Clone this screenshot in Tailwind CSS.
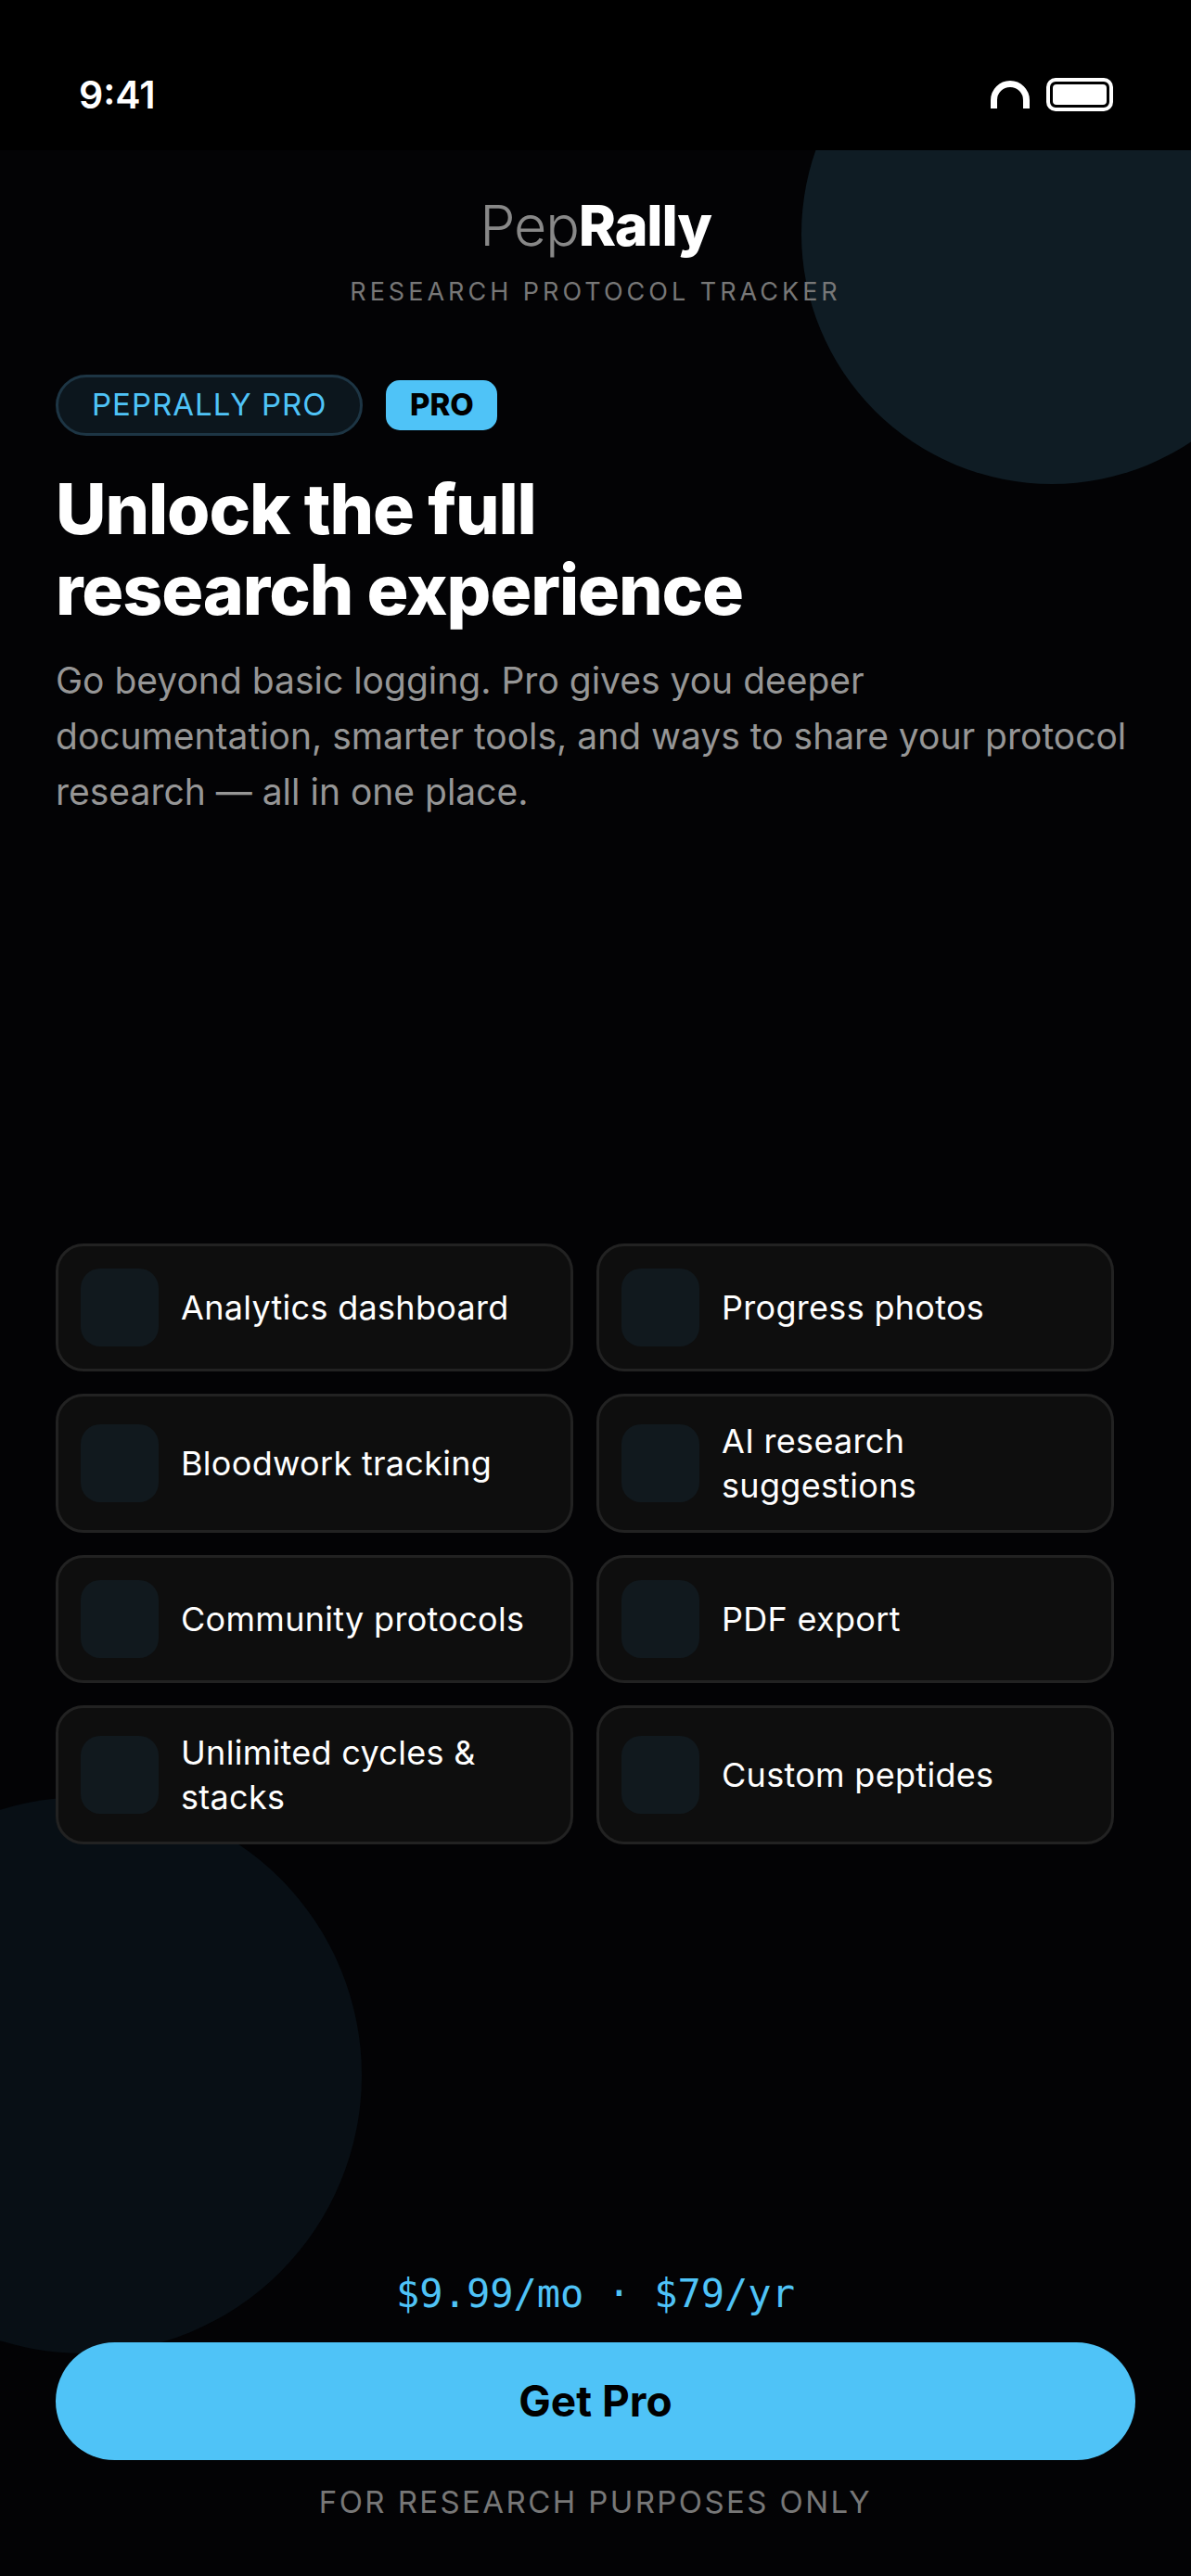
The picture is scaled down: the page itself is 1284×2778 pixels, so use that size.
<!DOCTYPE html>
<html lang="en">
<head>
    <meta charset="UTF-8">
    <meta name="viewport" content="width=device-width, initial-scale=1.0">
    <title>PepRally Pro</title>
    <script src="https://cdn.jsdelivr.net/npm/@tailwindcss/browser@4"></script>
</head>
<body class="bg-[#030305] font-['Inter',sans-serif]">
    <div class="w-[1284px] h-[2778px] flex flex-col overflow-hidden">
        <!-- Status bar -->
        <header class="h-[162px] shrink-0 bg-black flex items-start justify-between pl-[85px] pr-[84px] pt-[75px]">
            <span class="text-[41px] leading-[54px] font-semibold text-white">9:41</span>
            <div class="flex items-start gap-[18px] pt-[9px]">
                <svg class="mt-[3px]" width="42" height="30" viewBox="0 0 42 30" fill="none"><path d="M3.5 30V21a17.5 17.5 0 0 1 35 0V30" stroke="#fff" stroke-width="7"/></svg>
                <div class="w-[72px] h-[36px] border-[4px] border-white rounded-[10px] p-[3px]">
                    <div class="w-full h-full bg-white rounded-[4px]"></div>
                </div>
            </div>
        </header>

        <main class="relative flex-1 flex flex-col overflow-hidden">
            <!-- Background circles -->
            <div class="absolute top-[-180px] right-[-120px] w-[540px] h-[540px] rounded-full bg-[#0f1c24]"></div>
            <div class="absolute bottom-[240px] left-[-210px] w-[600px] h-[600px] rounded-full bg-[#080f15]"></div>

            <div class="relative flex-1 flex flex-col">
                <!-- Logo -->
                <div class="pt-[45px] flex flex-col items-center">
                    <div class="text-[61px] leading-[72px] tracking-[-1.2px] text-[#888888] font-light">Pep<span class="font-extrabold text-white">Rally</span></div>
                    <div class="mt-[19px] text-[27px] leading-[33px] tracking-[4px] text-[#777777]">RESEARCH PROTOCOL TRACKER</div>
                </div>

                <!-- Hero -->
                <section class="pl-[60px] pr-[60px] mt-[73px]">
                    <div class="flex items-center gap-[25px]">
                        <span class="h-[66px] flex items-center px-[36px] rounded-full border-[3px] border-[#1d3544] bg-[#0c161d] text-[33px] tracking-[1px] text-[#4fc3f7]">PEPRALLY PRO</span>
                        <span class="w-[120px] h-[54px] flex items-center justify-center rounded-[15px] bg-[#4fc3f7] text-[33px] font-extrabold text-black">PRO</span>
                    </div>
                    <h1 class="mt-[35px] text-[75px] leading-[87px] font-extrabold tracking-[-1.1px] text-white">Unlock the full<br>research experience</h1>
                    <p class="mt-[25px] text-[39px] leading-[60px] text-[#969696]">Go beyond basic logging. Pro gives you deeper documentation, smarter tools, and ways to share your protocol research — all in one place.</p>
                </section>

                <!-- Features -->
                <section class="mt-[457px] pl-[60px] grid grid-cols-[558px_558px] gap-x-[25px] gap-y-[24px]">
                    <div class="flex items-center gap-[24px] p-[24px] rounded-[30px] border-[3px] border-[#222222] bg-[#0e0e0e]">
                        <div class="w-[84px] h-[84px] shrink-0 rounded-[21px] bg-[#11191e]"></div>
                        <span class="text-[36px] tracking-[0.3px] leading-[48px] text-white">Analytics dashboard</span>
                    </div>
                    <div class="flex items-center gap-[24px] p-[24px] rounded-[30px] border-[3px] border-[#222222] bg-[#0e0e0e]">
                        <div class="w-[84px] h-[84px] shrink-0 rounded-[21px] bg-[#11191e]"></div>
                        <span class="text-[36px] tracking-[0.3px] leading-[48px] text-white">Progress photos</span>
                    </div>
                    <div class="flex items-center gap-[24px] p-[24px] rounded-[30px] border-[3px] border-[#222222] bg-[#0e0e0e]">
                        <div class="w-[84px] h-[84px] shrink-0 rounded-[21px] bg-[#11191e]"></div>
                        <span class="text-[36px] tracking-[0.3px] leading-[48px] text-white">Bloodwork tracking</span>
                    </div>
                    <div class="flex items-center gap-[24px] p-[24px] rounded-[30px] border-[3px] border-[#222222] bg-[#0e0e0e]">
                        <div class="w-[84px] h-[84px] shrink-0 rounded-[21px] bg-[#11191e]"></div>
                        <span class="text-[36px] tracking-[0.3px] leading-[48px] text-white">AI research suggestions</span>
                    </div>
                    <div class="flex items-center gap-[24px] p-[24px] rounded-[30px] border-[3px] border-[#222222] bg-[#0e0e0e]">
                        <div class="w-[84px] h-[84px] shrink-0 rounded-[21px] bg-[#11191e]"></div>
                        <span class="text-[36px] tracking-[0.3px] leading-[48px] text-white">Community protocols</span>
                    </div>
                    <div class="flex items-center gap-[24px] p-[24px] rounded-[30px] border-[3px] border-[#222222] bg-[#0e0e0e]">
                        <div class="w-[84px] h-[84px] shrink-0 rounded-[21px] bg-[#11191e]"></div>
                        <span class="text-[36px] tracking-[0.3px] leading-[48px] text-white">PDF export</span>
                    </div>
                    <div class="flex items-center gap-[24px] p-[24px] rounded-[30px] border-[3px] border-[#222222] bg-[#0e0e0e]">
                        <div class="w-[84px] h-[84px] shrink-0 rounded-[21px] bg-[#11191e]"></div>
                        <span class="w-[320px] text-[36px] tracking-[0.3px] leading-[48px] text-white">Unlimited cycles &amp; stacks</span>
                    </div>
                    <div class="flex items-center gap-[24px] p-[24px] rounded-[30px] border-[3px] border-[#222222] bg-[#0e0e0e]">
                        <div class="w-[84px] h-[84px] shrink-0 rounded-[21px] bg-[#11191e]"></div>
                        <span class="text-[36px] tracking-[0.3px] leading-[48px] text-white">Custom peptides</span>
                    </div>
                </section>

                <!-- Footer -->
                <footer class="mt-auto px-[60px] pb-[59px] flex flex-col items-center">
                    <div class="font-['DejaVu_Sans_Mono',monospace] text-[42px] leading-[54px] text-[#4fc3f7]">$9.99/mo · $79/yr</div>
                    <button class="mt-[25px] w-full h-[127px] rounded-full bg-[#4fc3f7] text-[46px] font-bold text-black">Get Pro</button>
                    <div class="mt-[24px] text-[33px] leading-[42px] tracking-[2.4px] text-[#777777]">FOR RESEARCH PURPOSES ONLY</div>
                </footer>
            </div>
        </main>
    </div>
</body>
</html>
